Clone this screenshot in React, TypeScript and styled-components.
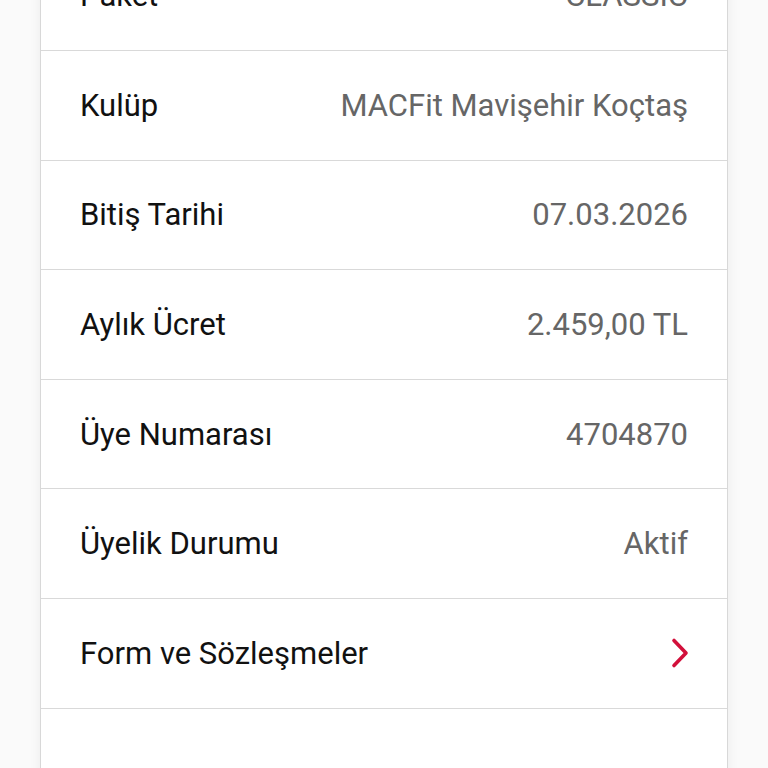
import styled, { createGlobalStyle } from "styled-components";

const GlobalStyle = createGlobalStyle`
  html, body {
    margin: 0;
    padding: 0;
    background: #fafafa;
    font-family: Roboto, "Noto Sans", sans-serif;
    overflow: hidden;
  }
`;

const rows: { label: string; value?: string; link?: boolean }[] = [
  { label: "Paket", value: "CLASSIC" },
  { label: "Kulüp", value: "MACFit Mavişehir Koçtaş" },
  { label: "Bitiş Tarihi", value: "07.03.2026" },
  { label: "Aylık Ücret", value: "2.459,00 TL" },
  { label: "Üye Numarası", value: "4704870" },
  { label: "Üyelik Durumu", value: "Aktif" },
  { label: "Form ve Sözleşmeler", link: true },
];

const Page = styled.div`
  height: 768px;
  overflow: hidden;
  padding: 0 40px;
`;

const Card = styled.div`
  margin-top: -58.5px;
  min-height: 900px;
  background: #fff;
  border-left: 1px solid #d8d8d8;
  border-right: 1px solid #d8d8d8;
  box-shadow: 0 0 12px rgba(0, 0, 0, 0.06);
`;

const Row = styled.div`
  box-sizing: border-box;
  height: 109.6px;
  display: flex;
  align-items: center;
  justify-content: space-between;
  padding: 0 39px 0 39px;
  border-bottom: 1.5px solid #d9d9d9;
  font-size: 31px;
`;

const Label = styled.span`
  color: #111;
`;

const Value = styled.span`
  color: #666;
`;

const Chevron = () => (
  <svg width="22" height="32" viewBox="0 0 22 32" style={{ marginRight: -3 }}>
    <path
      d="M5 3.5 L17 16 L5 28.5"
      fill="none"
      stroke="#d2103b"
      strokeWidth="3.6"
      strokeLinecap="round"
      strokeLinejoin="round"
    />
  </svg>
);

export default function App() {
  return (
    <>
      <GlobalStyle />
      <Page>
        <Card>
          {rows.map((r) => (
            <Row key={r.label}>
              <Label>{r.label}</Label>
              {r.link ? <Chevron /> : <Value>{r.value}</Value>}
            </Row>
          ))}
        </Card>
      </Page>
    </>
  );
}
